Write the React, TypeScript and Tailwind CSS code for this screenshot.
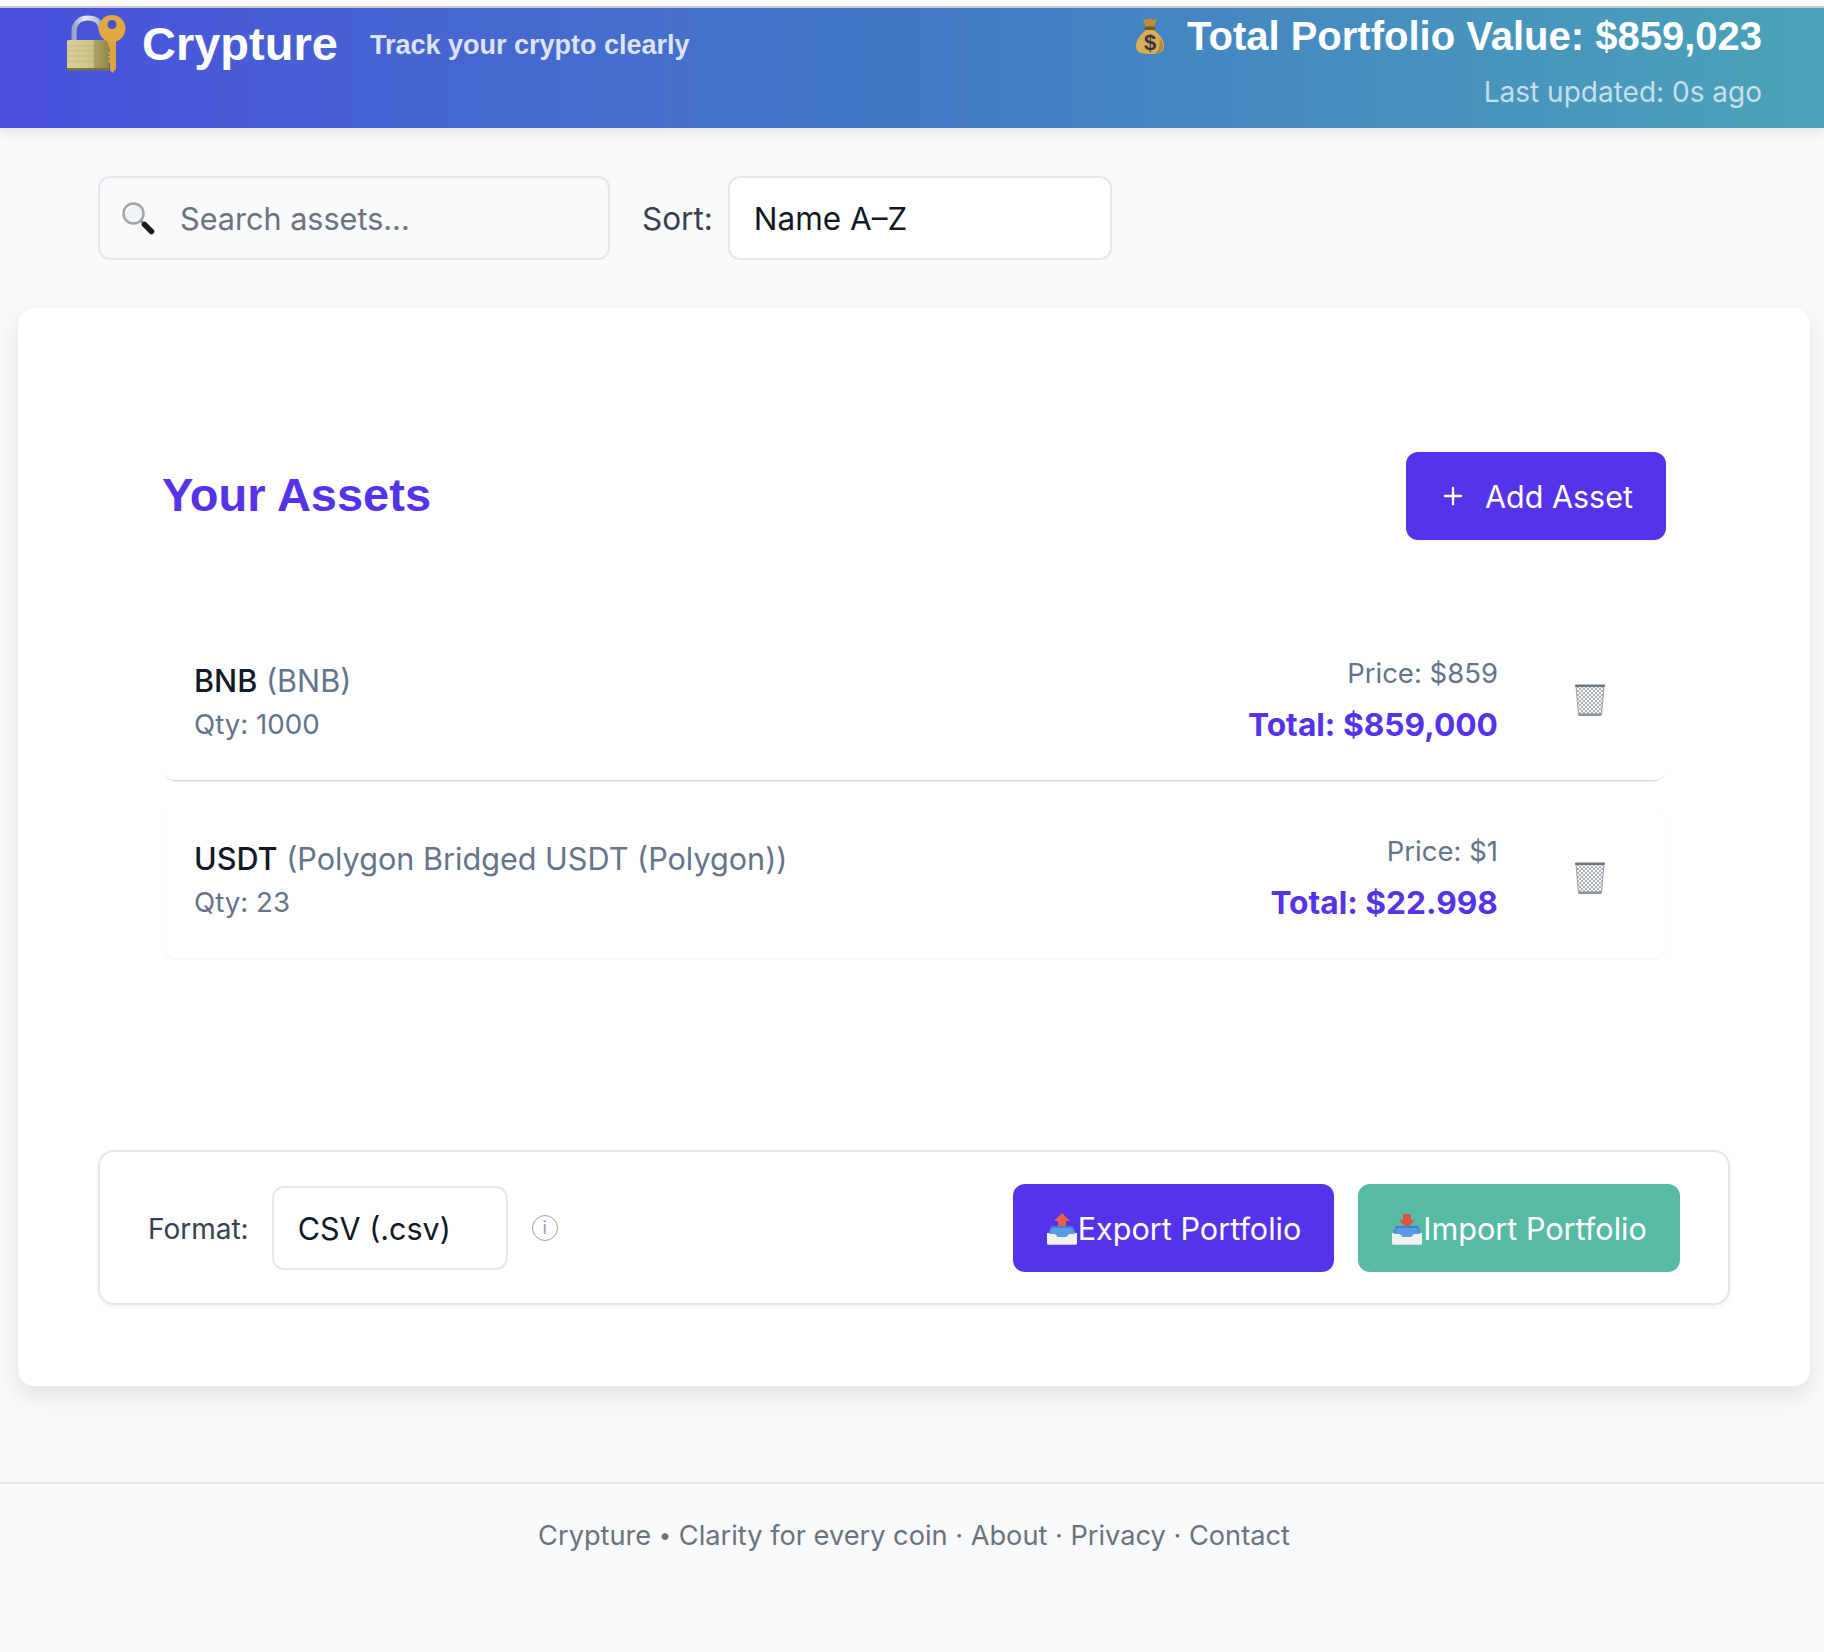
import React from 'react';
import { Plus } from 'lucide-react';

const LockKeyIcon = () => (
  <svg width="60" height="58" viewBox="0 0 60 58" className="shrink-0">
    <defs>
      <linearGradient id="lockBody" x1="0" x2="1" y1="0" y2="0">
        <stop offset="0" stopColor="#d6cf9a" />
        <stop offset="0.62" stopColor="#cdc485" />
        <stop offset="0.66" stopColor="#aaa264" />
        <stop offset="1" stopColor="#8f8748" />
      </linearGradient>
      <linearGradient id="shackle" x1="0" x2="1" y1="0" y2="0">
        <stop offset="0" stopColor="#9aa5c4" />
        <stop offset="0.4" stopColor="#eceef3" />
        <stop offset="1" stopColor="#a9b2c6" />
      </linearGradient>
    </defs>
    <path d="M8 28V16C8 8 14 3 22 3s12 4 13 10" fill="none" stroke="url(#shackle)" strokeWidth="5" />
    <rect x="1" y="25" width="42" height="30" rx="1.5" fill="url(#lockBody)" />
    <path d="M1 31h42M1 36h42M1 41h42M1 46h42" stroke="#a89c58" strokeWidth="0.6" opacity="0.6" />
    <rect x="1" y="53" width="42" height="2.5" fill="#7d7238" />
    <path d="M41 24h9v30l-3.500 4-2.500-3V48l-2-2 2-2-2-2 2-2-2-2 2-2z" fill="#dca53d" />
    <circle cx="46" cy="13.500" r="13.500" fill="#e0a83f" />
    <circle cx="46" cy="9.500" r="4.500" fill="#4650d6" />
  </svg>
);

const SearchIcon = () => (
  <svg width="34" height="34" viewBox="0 0 34 34" className="shrink-0">
    <circle cx="12.500" cy="12.500" r="10" fill="#f1f4f7" stroke="#a3a7ad" strokeWidth="2.500" />
    <path d="M5 12a8 8 0 0 1 7-7" fill="none" stroke="#fff" strokeWidth="2" />
    <path d="M20 20l3.500 3.500" stroke="#8b8f96" strokeWidth="3" />
    <path d="M23.500 23.500l7 7" stroke="#1c1c1c" strokeWidth="5.500" strokeLinecap="round" />
  </svg>
);

const MoneyBagIcon = () => (
  <svg width="30" height="38" viewBox="0 0 30 38" className="shrink-0">
    <path d="M8 1l3.500 2L15 1l3.500 2L22 1l-3 10h-8z" fill="#b98f3f" />
    <rect x="9.500" y="9.500" width="11" height="3.500" rx="1.500" fill="#7b5a22" />
    <path d="M11 13C5 18 1 23 1 29c0 6 4 8 14 8s14-2 14-8c0-6-4-11-10-16z" fill="#d9ae57" />
    <path d="M24 20c3 4 4 7 4 10 0 4-3 6-8 6 4-2 6-9 4-16z" fill="#b48a38" />
    <text x="15" y="33" textAnchor="middle" fontSize="22" fontWeight="700" fill="#3a3342" fontFamily="Liberation Sans, sans-serif">$</text>
  </svg>
);

const TrashIcon = () => (
  <svg width="32" height="34" viewBox="0 0 32 34">
    <defs>
      <pattern id="mesh" width="4" height="4" patternUnits="userSpaceOnUse">
        <rect width="4" height="4" fill="#f3f4f5" />
        <path d="M0 0l4 4M4 0L0 4" stroke="#8f979f" strokeWidth="0.700" />
      </pattern>
    </defs>
    <path d="M2 3h28l-2.500 29c0 1-23 1-23 0z" fill="url(#mesh)" />
    <path d="M2 3l2.500 29M30 3l-2.500 29" stroke="#9aa2aa" strokeWidth="1" />
    <rect x="1" y="1.500" width="30" height="2.500" rx="1" fill="#6f7780" />
    <rect x="4.500" y="30.500" width="23" height="2.500" rx="1" fill="#8a929a" />
  </svg>
);

const TrayIcon = ({ down }: { down?: boolean }) => (
  <svg width="32" height="32" viewBox="0 0 32 32" className="shrink-0">
    {down ? (
      <path d="M12 1h8v6h4l-8 8-8-8h4z" fill="#e0533f" />
    ) : (
      <path d="M16 0l8 8h-4v6h-8V8H8z" fill="#e8604c" />
    )}
    <path d="M5 13h22l4 11H1z" fill="#3f7fd1" />
    <path d="M1 20h8l3 4h8l3-4h8v10.500c0 .800-.500 1.200-1.200 1.200H2.200c-.700 0-1.200-.400-1.200-1.200z" fill="#f1f1ef" />
    <path d="M6 15h20l3 6h-6l-3 3h-8l-3-3H3z" fill="#5b9be6" />
  </svg>
);

const assets = [
  { symbol: 'BNB', name: '(BNB)', qty: 'Qty: 1000', price: 'Price: $859', total: 'Total: $859,000', shadow: 'shadow-[0_3px_2px_-2px_rgba(148,163,184,0.55)]' },
  { symbol: 'USDT', name: '(Polygon Bridged USDT (Polygon))', qty: 'Qty: 23', price: 'Price: $1', total: 'Total: $22.998', shadow: 'shadow-[0_1px_2px_rgba(148,163,184,0.14)]' },
];

export default function App() {
  return (
    <div className="min-h-[1652px] bg-[#f9fafb] font-['Inter',sans-serif] text-[#111827] flex flex-col">
      <div className="h-[8px] bg-white border-b-2 border-[#c9cacb]" />

      <header className="h-[120px] flex items-start justify-between pl-[66px] pr-[62px] bg-gradient-to-r from-[#4a4fdc] via-[#4279c5] to-[#4ca3b8] shadow-[0_4px_12px_rgba(0,0,0,0.1)] font-['Liberation_Sans',sans-serif] relative">
        <div className="flex items-center pt-[6px]">
          <LockKeyIcon />
          <span className="ml-[16px] text-[47px] leading-[60px] font-bold text-white">Crypture</span>
          <span className="ml-[32px] text-[27px] leading-[40px] font-bold text-[#dfe2f8] mt-[1px]">Track your crypto clearly</span>
        </div>
        <div className="flex flex-col items-end pt-[6px]">
          <div className="flex items-center">
            <MoneyBagIcon />
            <span className="ml-[22px] text-[40px] leading-[44px] font-bold text-white">Total Portfolio Value: $859,023</span>
          </div>
          <span className="mt-[18px] text-[28px] leading-[32px] font-['Inter',sans-serif] text-white/70">Last updated: 0s ago</span>
        </div>
      </header>

      <div className="mt-[48px] pl-[98px] flex items-center">
        <div className="w-[512px] h-[84px] flex items-center pl-[21px] border-2 border-[#e5e7eb] rounded-[12px]">
          <SearchIcon />
          <input placeholder="Search assets..." className="ml-[25px] pt-[1px] bg-transparent outline-none w-[400px] text-[30.6px] placeholder:text-[#6b7280]" />
        </div>
        <span className="ml-[32px] pt-[1px] text-[31.5px] text-[#374151]">Sort:</span>
        <div className="ml-[15px] w-[384px] h-[84px] flex items-center pl-[24px] pt-[1px] bg-white border-2 border-[#e5e7eb] rounded-[12px] text-[31.5px]">Name A–Z</div>
      </div>

      <main className="mt-[48px] ml-[18px] mr-[14px] h-[1078px] bg-white rounded-[16px] shadow-[0_10px_24px_rgba(0,0,0,0.1)] pt-[144px]">
        <div className="ml-[145px] mr-[144px]">
          <div className="flex items-center justify-between">
            <h2 className="-ml-[1px] -mt-[1px] text-[47px] font-bold text-[#5533ea] font-['Liberation_Sans',sans-serif]">Your Assets</h2>
            <button className="w-[260px] h-[88px] flex items-center justify-center gap-[18px] bg-[#5533ea] rounded-[12px] text-white text-[30.5px]">
              <Plus size={28} strokeWidth={2} />
              <span className="pt-[1px]">Add Asset</span>
            </button>
          </div>

          <div className="mt-[92px] flex flex-col gap-[30px]">
            {assets.map(a => (
              <div key={a.symbol} className={`h-[148px] flex items-center justify-between pl-[32px] pr-[60px] pb-[7px] rounded-[12px] bg-white ${a.shadow}`}>
                <div className="-ml-[1px]">
                  <div className="text-[30.6px] leading-[44px]">
                    <span className="font-medium">{a.symbol}</span> <span className="text-[#64748b]">{a.name}</span>
                  </div>
                  <div className="-mt-[1px] text-[27.7px] leading-[44px] text-[#64748b]">{a.qty}</div>
                </div>
                <div className="flex items-center gap-[76px] pb-[6px]">
                  <div className="text-right">
                    <div className="text-[27.5px] leading-[40px] text-[#64748b]">{a.price}</div>
                    <div className="mt-[10px] text-[31.7px] leading-[44px] font-bold text-[#5533ea]">{a.total}</div>
                  </div>
                  <TrashIcon />
                </div>
              </div>
            ))}
          </div>
        </div>

        <div className="mt-[192px] mx-[80px] h-[155px] flex items-center justify-between pl-[48px] pr-[48px] bg-white border-2 border-[#e5e7eb] rounded-[16px] shadow-[0_2px_4px_rgba(0,0,0,0.05)]">
          <div className="flex items-center">
            <span className="pt-[3px] text-[28px] text-[#374151]">Format:</span>
            <div className="ml-[23px] w-[236px] h-[84px] flex items-center pl-[24px] pt-[3px] border-2 border-[#e5e7eb] rounded-[12px] text-[30.5px]">CSV (.csv)</div>
            <span className="ml-[24px] w-[26px] h-[26px] flex items-center justify-center rounded-full border border-[#9ca3af] text-[18px] text-[#9ca3af]">i</span>
          </div>
          <div className="flex items-center gap-[24px]">
            <button className="w-[321px] h-[88px] flex items-center justify-center pt-[2px] bg-[#5533ea] rounded-[12px] text-white text-[30.6px]">
              <TrayIcon />Export Portfolio
            </button>
            <button className="w-[322px] h-[88px] flex items-center justify-center pt-[2px] bg-[#57bba4] rounded-[12px] text-white text-[30.6px]">
              <TrayIcon down />Import Portfolio
            </button>
          </div>
        </div>
      </main>

      <footer className="mt-[96px] border-t-2 border-[#e5e7eb] pt-[34px] pl-[4px] text-center text-[27.2px] leading-[36px] text-[#6b7280]">
        Crypture <span className="text-[22px] leading-[20px] align-[2px]">•</span> Clarity for every coin · About · Privacy · Contact
      </footer>
    </div>
  );
}
